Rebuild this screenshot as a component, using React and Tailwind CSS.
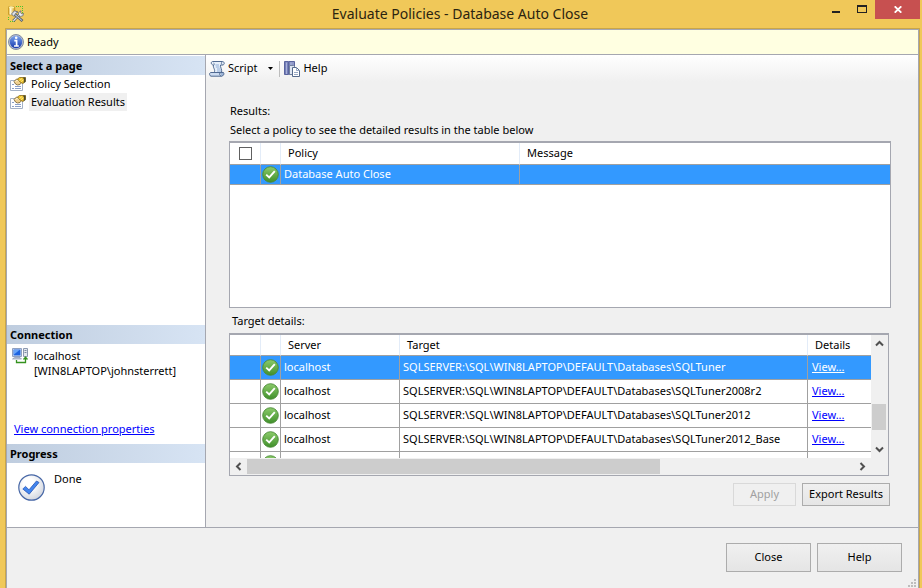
import { useState } from 'react';

const PAGES = ['Policy Selection', 'Evaluation Results'];

const TARGET_ROOT = 'SQLSERVER:\\SQL\\WIN8LAPTOP\\DEFAULT\\Databases\\';

const TARGETS = [
  { server: 'localhost', database: 'SQLTuner' },
  { server: 'localhost', database: 'SQLTuner2008r2' },
  { server: 'localhost', database: 'SQLTuner2012' },
  { server: 'localhost', database: 'SQLTuner2012_Base' },
];

function AppIcon() {
  return (
    <svg width="16" height="16" viewBox="0 0 16 16" aria-hidden="true">
      <defs>
        <linearGradient id="cylinder">
          <stop offset="0" stopColor="#d9a21b" />
          <stop offset=".35" stopColor="#fffbe0" />
          <stop offset="1" stopColor="#cf9a12" />
        </linearGradient>
      </defs>
      <path d="M8 .5H15M14.5 2V9M.5 11V15M2 15.5H7" fill="none" stroke="#4cc22e" strokeDasharray="1 1" />
      <path d="M.3 1.3C.3 -.2 6.7 -.2 6.7 1.3V8C6.7 9.4 .3 9.4 .3 8Z" fill="url(#cylinder)" stroke="#b98a16" strokeWidth=".6" />
      <ellipse cx="3.5" cy="1.4" rx="2.8" ry=".9" fill="#fdf0a8" />
      <path d="M5.2 15L11.5 8.5" stroke="#56606f" strokeWidth="2.6" />
      <path d="M5.4 14.8L11.5 8.5" stroke="#eceff4" strokeWidth="1.2" />
      <path d="M7 8.5L14.5 15" stroke="#4d5767" strokeWidth="2.6" />
      <path d="M7 8.5L14 14.6" stroke="#b9c1cd" strokeWidth="1.1" />
      <path d="M3.5 8L6.5 4.8L10 6L7.5 7.5L6 10.5Z" fill="#dfe3ea" stroke="#56606f" strokeWidth=".8" />
      <path d="M10.5 8.8L10.8 6.2L13 4.8L12.6 6.8L13.8 8L15.6 7.4L14.8 9.8L12.2 10.4Z" fill="#eef0f4" stroke="#56606f" strokeWidth=".7" />
    </svg>
  );
}

function InfoIcon() {
  return (
    <svg width="16" height="16" viewBox="0 0 16 16" aria-hidden="true">
      <defs>
        <linearGradient id="info" x2="0" y2="1">
          <stop offset="0" stopColor="#7aa4ee" />
          <stop offset="1" stopColor="#1538ac" />
        </linearGradient>
      </defs>
      <circle cx="8" cy="8" r="7.5" fill="#b9c0d0" stroke="#6a7694" strokeWidth=".8" />
      <circle cx="8" cy="8" r="6.2" fill="url(#info)" />
      <path d="M6.3 6.6H8.6V11.5M6 12H10.8" fill="none" stroke="#fff" strokeWidth="1.7" />
      <circle cx="8.2" cy="3.8" r="1.3" fill="#fff" />
    </svg>
  );
}

function PageIcon() {
  return (
    <svg width="16" height="14" viewBox="0 0 16 14" aria-hidden="true" className="shrink-0">
      <path d="M.5 3.5H12.5V13.5H.5Z" fill="#fff" stroke="#a3b1c6" />
      <path d="M2 7.5H4M2 11.5H4M5 11.5H11M5 9.5H11" stroke="#8aa0c8" />
      <path d="M4 4.5L6.5 2L9 2.5L11.5 5.5L10 7.5L7.5 8L5.5 7Z" fill="#efd08f" stroke="#6e5a30" strokeWidth=".8" />
      <path d="M5.5 4.5L7.5 3L9 4.5" fill="none" stroke="#fff6d8" />
      <path d="M7.5 2L9.5 .5H15.5V4.5L13 6.5L10 5Z" fill="#f0c42a" stroke="#86691a" strokeWidth=".8" />
      <path d="M9.5 3.5L12 1.5M11 4.8L13.5 2.5" stroke="#fff0a0" strokeWidth=".8" />
      <path d="M13 .5H15.5V5L13.5 6L14 3Z" fill="#4a4a30" />
    </svg>
  );
}

function ScriptIcon() {
  return (
    <svg width="16" height="16" viewBox="0 0 16 16" aria-hidden="true">
      <path d="M3.5 .5H13.5C15.8 .7 15.8 4 13.5 4H11.5C11 6 13.5 9 12.5 12L5 11.5C7 9 3.5 6.5 4.5 4C2 4 1.5 1 3.5 .5Z" fill="#e6effa" stroke="#506a92" />
      <path d="M13.5 .8C12 1 12 3.5 13.5 3.8M4.5 4C5.5 4 5.8 2.5 4.5 2" fill="none" stroke="#506a92" strokeWidth=".8" />
      <path d="M6.5 4H10M6.8 6H10.5M8 8H11.5M8 10H12" stroke="#86a5d3" strokeWidth=".9" />
      <path d="M1.5 11.5H11C10 13 11 15 12.5 15.2H2C.2 14.8 .2 12 1.5 11.5Z" fill="#cddcf1" stroke="#506a92" />
      <path d="M11 11.5H14.5C15.5 13 14.5 15 12.5 15.2" fill="#9db5d8" stroke="#506a92" />
    </svg>
  );
}

function HelpIcon() {
  return (
    <svg width="16" height="16" viewBox="0 0 16 16" aria-hidden="true">
      <path d="M.5 .5H4.5V13.5H.5Z" fill="#7580b8" stroke="#5a649f" />
      <path d="M5 .5H10.5V13.5H5Z" fill="#8f99c9" stroke="#5a649f" />
      <path d="M2.5 1.5V13M7 1.5V13" stroke="#a9b1d9" />
      <path d="M5.5 4.5H9.5L11.5 6.5V13.5H5.5Z" fill="#dfe6f2" stroke="#71809e" />
      <path d="M8.5 6.5H12.5L15.5 9.5V15.5H8.5Z" fill="#fff" stroke="#566a8c" />
      <path d="M12.5 6.5V9.5H15.5M10 11.5H14M10 13.5H14" fill="none" stroke="#7f93b6" strokeWidth=".8" />
    </svg>
  );
}

function ConnectionIcon() {
  return (
    <svg width="16" height="16" viewBox="0 0 16 16" aria-hidden="true">
      <path d="M.5 .5H9.5V8.5H.5Z" fill="#dfe7f3" stroke="#8fa0c0" />
      <path d="M1.5 1.5H8.5V7.5H1.5Z" fill="#1d63e0" />
      <path d="M2 2H7.5L2 6.5Z" fill="#67a4f8" />
      <path d="M2.5 9.5H8L9.5 11H.5Z" fill="#c2cbdc" stroke="#8795b1" strokeWidth=".7" />
      <path d="M11.5 .5H15.5V8.5H11.5Z" fill="#e4e8ef" stroke="#8d99b0" />
      <path d="M12.5 2.5H14.5M12.5 4.5H14.5" stroke="#7d8aa2" />
      <path d="M4.5 12V14.5H13.5V9.5M11.5 11.5L13.5 9.2L15.5 11.5" fill="none" stroke="#35921f" strokeWidth="1.3" />
    </svg>
  );
}

function DoneIcon() {
  return (
    <svg width="27" height="27" viewBox="0 0 27 27" aria-hidden="true" className="shrink-0">
      <defs>
        <radialGradient id="done" cx=".4" cy=".35" r=".7">
          <stop offset=".3" stopColor="#fff" />
          <stop offset="1" stopColor="#cfd3dc" />
        </radialGradient>
      </defs>
      <circle cx="13.5" cy="13.5" r="12.7" fill="url(#done)" stroke="#4767a6" strokeWidth="1.2" />
      <path d="M4.8 15L7.5 12.4L11 15.8L18.5 7L21 8.5L11.2 20.2Z" fill="#4285ee" stroke="#2856b6" strokeWidth=".8" />
    </svg>
  );
}

function OkIcon() {
  return (
    <svg width="17" height="17" viewBox="0 0 17 17" role="img" aria-label="Passed" className="mx-auto block">
      <defs>
        <linearGradient id="ok" x2="0" y2="1">
          <stop offset="0" stopColor="#8ccb6b" />
          <stop offset="1" stopColor="#3f8f2a" />
        </linearGradient>
      </defs>
      <circle cx="8.5" cy="8.5" r="7.8" fill="url(#ok)" stroke="#4b8a38" strokeWidth=".9" />
      <path d="M4.2 8.6L7.2 11.4L12.8 5.2" fill="none" stroke="#fff" strokeWidth="1.9" />
    </svg>
  );
}

function Chevron({ d }) {
  return (
    <svg width="9" height="9" viewBox="0 0 9 9" aria-hidden="true">
      <path d={d} fill="none" stroke="#505050" strokeWidth="2" />
    </svg>
  );
}

function TitleBar() {
  return (
    <header className="flex h-7 items-start">
      <div className="w-32 pt-[6px] pl-2">
        <AppIcon />
      </div>
      <h1 className="flex-1 text-center text-[14px] leading-7 text-[#2b2410]">
        Evaluate Policies - Database Auto Close
      </h1>
      <div className="mr-[2px] flex w-32 justify-end">
        <button type="button" aria-label="Minimize" className="flex h-[18px] w-[26px] items-start justify-center pt-[11px]">
          <span className="h-[2px] w-2 bg-[#222]" />
        </button>
        <button type="button" aria-label="Maximize" className="flex h-[18px] w-[26px] items-start justify-center pt-[5px]">
          <span className="h-2 w-[10px] border border-t-2 border-[#222]" />
        </button>
        <button type="button" aria-label="Close window" className="flex h-[19px] w-[45px] items-center justify-center bg-[#c75050]">
          <svg width="8" height="7" viewBox="0 0 8 7" aria-hidden="true">
            <path d="M.7 .3L7.3 6.7M7.3 .3L.7 6.7" stroke="#fff" strokeWidth="1.8" />
          </svg>
        </button>
      </div>
    </header>
  );
}

function SideHeading({ children }) {
  return (
    <h2 className="h-[19px] bg-linear-to-r from-[#bfcddf] to-[#d7e4f4] pl-[3px] leading-[19px] font-bold">
      {children}
    </h2>
  );
}

function Sidebar({ page, onSelect }) {
  return (
    <aside className="flex w-[199px] shrink-0 flex-col border-r border-[#a5a7b0] bg-white pt-px">
      <SideHeading>Select a page</SideHeading>
      <nav className="flex-1">
        {PAGES.map((name) => (
          <button
            key={name}
            type="button"
            onClick={() => onSelect(name)}
            className="flex h-[18px] w-full items-center gap-[3px] pl-[3px] text-left"
          >
            <PageIcon />
            <span className={page === name ? 'bg-[#f0f0f0] px-[2px] leading-[18px]' : 'px-[2px] leading-[18px]'}>
              {name}
            </span>
          </button>
        ))}
      </nav>

      <SideHeading>Connection</SideHeading>
      <div className="flex h-[100px] flex-col justify-between pt-1 pb-[7px]">
        <div className="flex gap-[6px] pl-[5px]">
          <ConnectionIcon />
          <p className="leading-[15px]">
            localhost
            <br />
            [WIN8LAPTOP\johnsterrett]
          </p>
        </div>
        <a href="#connection" className="self-start pl-[7px] leading-4 text-[#0000ff] underline">
          View connection properties
        </a>
      </div>

      <SideHeading>Progress</SideHeading>
      <div className="flex h-16 gap-[9px] pt-[8px] pl-[11px]">
        <div className="pt-[3px]">
          <DoneIcon />
        </div>
        <p className="leading-4">Done</p>
      </div>
    </aside>
  );
}

function Toolbar() {
  return (
    <div className="flex h-[27px] items-center bg-linear-to-b from-white to-[#f0f0f0] pl-[3px]">
      <button type="button" className="flex items-center gap-[3px]">
        <ScriptIcon />
        Script
      </button>
      <button type="button" aria-label="Script options" className="flex w-[22px] justify-center pl-1">
        <svg width="5" height="3" viewBox="0 0 5 3" aria-hidden="true">
          <path d="M0 0H5L2.5 3Z" fill="#000" />
        </svg>
      </button>
      <span className="mr-1 h-4 w-px bg-[#bdbdbd]" />
      <button type="button" className="flex items-center gap-[3px]">
        <HelpIcon />
        Help
      </button>
    </div>
  );
}

function PolicyTable() {
  const [checked, setChecked] = useState(false);
  const head = 'h-[22px] border-r border-b border-r-[#e3ecf8] border-b-[#a0a0a0] text-left font-normal';
  const cell = 'h-5 border-r border-b border-[#a0a0a0]';

  return (
    <div className="h-[167px] border border-t-2 border-[#a5a7b0] bg-white">
      <table className="w-full table-fixed border-separate border-spacing-0">
        <colgroup>
          <col className="w-[31px]" />
          <col className="w-5" />
          <col className="w-[239px]" />
          <col />
        </colgroup>
        <thead>
          <tr>
            <th className={head}>
              <input
                type="checkbox"
                aria-label="Select all policies"
                checked={checked}
                onChange={(e) => setChecked(e.target.checked)}
                className="mx-auto block size-[13px] appearance-none border border-[#606060] bg-white checked:bg-[#3399ff]"
              />
            </th>
            <th className={head} aria-label="Status" />
            <th className={`${head} pl-[7px]`}>Policy</th>
            <th className={`${head} border-r-0 pl-[7px]`}>Message</th>
          </tr>
        </thead>
        <tbody>
          <tr className="bg-[#3399ff] text-white">
            <td className={cell} />
            <td className={cell}>
              <OkIcon />
            </td>
            <td className={`${cell} pl-[3px]`}>Database Auto Close</td>
            <td className={`${cell} border-r-0`} />
          </tr>
        </tbody>
      </table>
    </div>
  );
}

function TargetTable() {
  const [selected, setSelected] = useState(0);
  const head = 'h-[21px] border-r border-b border-r-[#e3ecf8] border-b-[#a0a0a0] text-left font-normal';
  const cell = 'h-6 border-r border-b border-[#a0a0a0]';

  return (
    <div className="mr-[2px] flex h-[143px] flex-col border border-t-2 border-[#a5a7b0] bg-[#f0f0f0]">
      <div className="flex min-h-0 flex-1">
        <div className="min-w-0 flex-1 overflow-hidden bg-white">
          <table className="w-full table-fixed border-separate border-spacing-0">
            <colgroup>
              <col className="w-[31px]" />
              <col className="w-5" />
              <col className="w-[119px]" />
              <col />
              <col className="w-[63px]" />
            </colgroup>
            <thead>
              <tr>
                <th className={head} aria-label="Selector" />
                <th className={head} aria-label="Status" />
                <th className={`${head} pl-[7px]`}>Server</th>
                <th className={`${head} pl-[7px]`}>Target</th>
                <th className={`${head} border-r-0 pl-[7px]`}>Details</th>
              </tr>
            </thead>
            <tbody>
              {TARGETS.map((t, i) => (
                <tr
                  key={t.database}
                  onClick={() => setSelected(i)}
                  className={selected === i ? 'bg-[#3399ff] text-white' : 'bg-white'}
                >
                  <td className={cell} />
                  <td className={cell}>
                    <OkIcon />
                  </td>
                  <td className={`${cell} pl-[3px]`}>{t.server}</td>
                  <td className={`${cell} truncate pl-[3px]`}>
                    {TARGET_ROOT}
                    {t.database}
                  </td>
                  <td className={`${cell} border-r-0 pl-1`}>
                    <a
                      href={`#${t.database}`}
                      className={selected === i ? 'text-white underline' : 'text-[#0000ff] underline'}
                    >
                      View...
                    </a>
                  </td>
                </tr>
              ))}
              <tr>
                <td className={cell} />
                <td className={cell}>
                  <OkIcon />
                </td>
                <td className={cell} />
                <td className={cell} />
                <td className={`${cell} border-r-0`} />
              </tr>
            </tbody>
          </table>
        </div>
        {/* vertical scroll bar */}
        <div className="flex w-[17px] flex-col items-center">
          <button type="button" aria-label="Scroll up" className="flex h-[17px] items-center">
            <Chevron d="M1 6.5L4.5 3L8 6.5" />
          </button>
          <div className="flex w-full flex-1 flex-col justify-end pr-[2px] pb-[11px] pl-px">
            <div className="h-[26px] bg-[#cdcdcd]" />
          </div>
          <button type="button" aria-label="Scroll down" className="flex h-[17px] items-center">
            <Chevron d="M1 2.5L4.5 6L8 2.5" />
          </button>
        </div>
      </div>
      {/* horizontal scroll bar */}
      <div className="flex h-[17px] pr-[17px]">
        <button type="button" aria-label="Scroll left" className="flex w-[17px] items-center justify-center">
          <Chevron d="M6.5 1L3 4.5L6.5 8" />
        </button>
        <div className="flex-1 pt-px pb-px">
          <div className="h-full w-[68%] bg-[#cdcdcd]" />
        </div>
        <button type="button" aria-label="Scroll right" className="flex w-[17px] items-center justify-center">
          <Chevron d="M2.5 1L6 4.5L2.5 8" />
        </button>
      </div>
    </div>
  );
}

function PushButton({ className, ...props }) {
  return (
    <button
      type="button"
      className={`border border-[#acacac] bg-linear-to-b from-[#f0f0f0] to-[#e5e5e5] disabled:border-[#d9d9d9] disabled:bg-none disabled:text-[#a0a0a0] ${className}`}
      {...props}
    />
  );
}

function Grip() {
  return (
    <svg width="8" height="8" viewBox="0 0 8 8" aria-hidden="true" className="absolute right-[2px] bottom-[1px]">
      <path d="M6 0H8V2H6ZM3 3H5V5H3ZM6 3H8V5H6ZM0 6H2V8H0ZM3 6H5V8H3ZM6 6H8V8H6Z" fill="#bdbdbd" />
    </svg>
  );
}

export default function App() {
  const [page, setPage] = useState('Evaluation Results');

  return (
    <div className="flex min-h-screen flex-col bg-[#f0c859] font-['Noto_Sans','Segoe_UI',sans-serif] text-[11px] text-black">
      <TitleBar />
      <div className="mr-[2px] ml-[5px] flex flex-1 flex-col border border-b-0 border-[#c9a648] bg-[#f0f0f0]">
        <div className="flex flex-1 flex-col border-x border-[#a5a7b0]">
          <div className="flex h-[26px] items-center gap-[3px] border-y border-[#a5a7b0] bg-[#ffffe1] pl-px">
            <InfoIcon />
            Ready
          </div>

          <div className="flex flex-1 border-b border-[#a5a7b0]">
            <Sidebar page={page} onSelect={setPage} />
            <main className="min-w-0 flex-1">
              <Toolbar />
              <div className="pr-[27px] pb-5 pl-[23px]">
                <p className="pt-[19px] pl-px leading-[19px]">Results:</p>
                <p className="mb-[2px] pl-px leading-[19px]">
                  Select a policy to see the detailed results in the table below
                </p>
                <PolicyTable />
                <p className="mt-[3px] mb-[3px] pl-[3px] leading-[19px]">Target details:</p>
                <TargetTable />
                <div className="mt-[7px] mr-px flex justify-end gap-[6px]">
                  <PushButton disabled className="h-[23px] w-[63px]">Apply</PushButton>
                  <PushButton className="h-[23px] w-[88px]">Export Results</PushButton>
                </div>
              </div>
            </main>
          </div>

          <footer className="relative flex justify-end gap-[6px] pt-[15px] pr-4 pb-4">
            <PushButton className="h-[29px] w-[85px]">Close</PushButton>
            <PushButton className="h-[29px] w-[85px]">Help</PushButton>
            <Grip />
          </footer>
        </div>
      </div>
    </div>
  );
}
